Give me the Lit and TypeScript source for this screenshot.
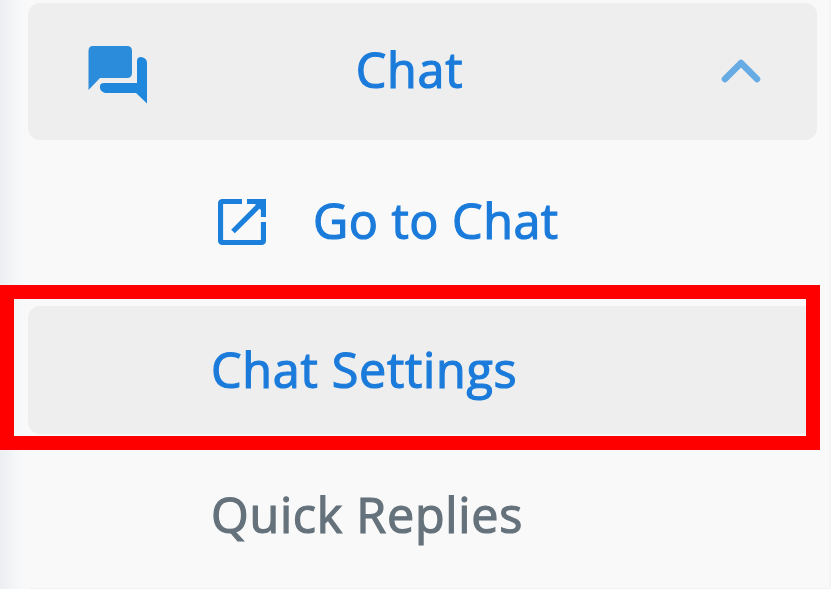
import { LitElement, html, css } from "lit";
import { customElement } from "lit/decorators.js";

@customElement("app-root")
export class AppRoot extends LitElement {
  static styles = css`
    :host {
      display: block;
      position: relative;
      box-sizing: border-box;
      width: 831px;
      height: 589px;
      overflow: hidden;
      padding: 3px 14px 0 28px;
      background:
        linear-gradient(90deg, #edeef1 0, #f2f3f5 10px, #f6f7f9 17px, #f9f9f9 29px, transparent 30px),
        linear-gradient(90deg, transparent 829px, #f4f5f6 829px),
        linear-gradient(180deg, #f9f9f9 588px, #f1f1f2 588px);
      font-family: "Open Sans", sans-serif;
      font-size: 48.5px;
      letter-spacing: 0.72px;
      -webkit-text-stroke: 1.2px currentColor;
      line-height: 66px;
      color: #1b7bdb;
      white-space: nowrap;
    }
    .row {
      box-sizing: border-box;
      display: flex;
      align-items: center;
    }
    .head {
      height: 137px;
      border-radius: 12px;
      background: #eee;
      padding: 0 56px 1px 60px;
      justify-content: space-between;
    }
    .bubbles {
      margin-top: 8px;
    }
    .head .label {
      margin-left: -50px;
      padding-bottom: 4px;
    }
    .link {
      height: 166px;
      padding: 0 0 3px 190px;
      gap: 47px;
    }
    .link .label {
      padding-bottom: 4px;
      letter-spacing: 0.5px;
    }
    .current {
      height: 128px;
      border-radius: 12px;
      background: #eee;
      padding: 0 0 3px 183px;
    }
    .plain {
      height: 160px;
      padding-left: 183px;
      color: #65727b;
    }
    svg {
      display: block;
      flex: none;
    }
    .frame {
      position: absolute;
      box-sizing: border-box;
      left: 0;
      top: 285px;
      width: 820px;
      height: 165px;
      border: 14px solid #f00;
    }
  `;

  render() {
    return html`
      <div class="row head">
        <svg class="bubbles" width="60" height="60" viewBox="0 0 60 60">
          <path fill="#2b8cdc" d="M5 1H39Q44 1 44 6V28Q44 33 39 33H12L0.500 45V6Q0.500 1 5 1Z" />
          <path fill="#1f88dd" d="M49 16Q49 12 53 12Q59 13 59 18V58.500L48 48H17Q11 46 12 41Q12 38 16 38H49Z" />
        </svg>
        <span class="label">Chat</span>
        <svg width="40" height="26" viewBox="0 0 40 26">
          <path d="M4 21 20 5 36 21" fill="none" stroke="#66abe4" stroke-width="6.6" stroke-linecap="round" stroke-linejoin="round" />
        </svg>
      </div>
      <div class="row link">
        <svg width="48" height="46" viewBox="0 0 48 46" fill="none" stroke="#1b7fdc" stroke-width="5.2">
          <path d="M24 2.5H5Q2.5 2.5 2.5 5V41Q2.5 43.5 5 43.5H43Q45.5 43.5 45.5 41V23" />
          <path d="M29 2.5H45.5V18M15 32.5 44 3.500" />
          <path d="M36 4H44V12Z" fill="#1b7fdc" stroke="none" />
        </svg>
        <span class="label">Go to Chat</span>
      </div>
      <div class="row current"><span>Chat Settings</span></div>
      <div class="row plain"><span>Quick Replies</span></div>
      <div class="frame"></div>
    `;
  }
}
